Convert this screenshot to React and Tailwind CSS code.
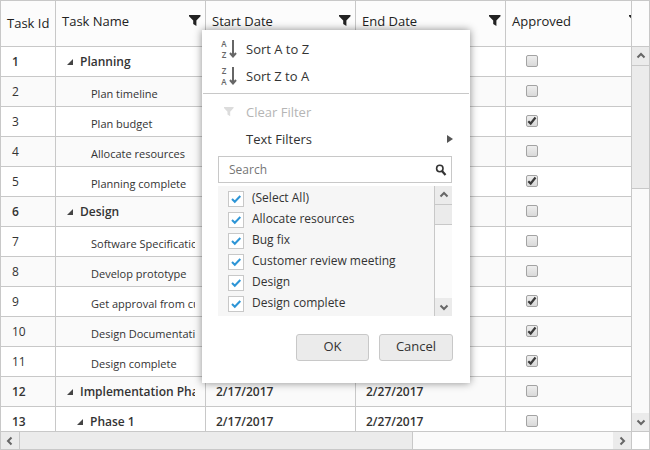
import React from "react";

const rows = [
  { id: 1, name: "Planning", level: 0, parent: true },
  { id: 2, name: "Plan timeline", level: 1 },
  { id: 3, name: "Plan budget", level: 1, approved: true },
  { id: 4, name: "Allocate resources", level: 1 },
  { id: 5, name: "Planning complete", level: 1, approved: true },
  { id: 6, name: "Design", level: 0, parent: true },
  { id: 7, name: "Software Specification", level: 1 },
  { id: 8, name: "Develop prototype", level: 1 },
  { id: 9, name: "Get approval from customer", level: 1, approved: true },
  { id: 10, name: "Design Documentation", level: 1, approved: true },
  { id: 11, name: "Design complete", level: 1, approved: true },
  { id: 12, name: "Implementation Phase", level: 0, parent: true, start: "2/17/2017", end: "2/27/2017" },
  { id: 13, name: "Phase 1", level: 1, parent: true, start: "2/17/2017", end: "2/27/2017" },
];

const filterValues = [
  "(Select All)",
  "Allocate resources",
  "Bug fix",
  "Customer review meeting",
  "Design",
  "Design complete",
];

function Funnel({ className }) {
  return (
    <svg viewBox="0 0 12 12" className={className} fill="currentColor" aria-hidden="true">
      <path d="M0 0h11.5v1.2L7.4 5.6V11L4.2 9V5.6L0 1.2z" />
    </svg>
  );
}

function Chevron({ direction }) {
  const paths = {
    up: "M1.5 6.5 5 3l3.5 3.5",
    down: "M1.5 3.5 5 7l3.5-3.5",
    left: "M6.5 1.5 3 5l3.5 3.5",
    right: "M3.5 1.5 7 5 3.5 8.5",
  };
  return (
    <svg viewBox="0 0 10 10" className="size-2.5" fill="none" stroke="#666" strokeWidth="2" aria-hidden="true">
      <path d={paths[direction]} />
    </svg>
  );
}

function SortIcon({ top, bottom }) {
  return (
    <span className="flex w-4 items-center gap-0.5 text-[#666]" aria-hidden="true">
      <span className="flex w-1.5 flex-col items-center text-[8px] leading-[11px] font-semibold">
        <span>{top}</span>
        <span>{bottom}</span>
      </span>
      <svg viewBox="0 0 8 18" className="h-[18px] w-2 shrink-0" fill="none" stroke="currentColor" strokeWidth="2">
        <path d="M4 0v16" />
        <path d="M1 13l3 3.5 3-3.5" />
      </svg>
    </span>
  );
}

function GridCheckbox({ checked, label }) {
  return (
    <span className="grid size-3">
      <input
        type="checkbox"
        defaultChecked={checked}
        aria-label={label}
        className="peer col-start-1 row-start-1 size-3 appearance-none rounded-[2px] border border-[#a3a3a3] bg-linear-to-b from-[#eee] to-[#d9d9d9]"
      />
      <svg
        viewBox="0 0 12 12"
        className="pointer-events-none invisible col-start-1 row-start-1 size-3 peer-checked:visible"
        fill="none"
        stroke="#3a3a3a"
        strokeWidth="2.2"
        aria-hidden="true"
      >
        <path d="M2.3 6.2 4.7 8.5 9.5 2.5" />
      </svg>
    </span>
  );
}

function FilterOption({ label }) {
  return (
    <label className="flex h-[21px] items-center gap-2">
      <span className="grid size-4 shrink-0">
        <input
          type="checkbox"
          defaultChecked
          className="peer col-start-1 row-start-1 size-4 appearance-none border border-[#c8c8c8] bg-white"
        />
        <svg
          viewBox="0 0 16 16"
          className="pointer-events-none invisible col-start-1 row-start-1 size-4 peer-checked:visible"
          fill="none"
          stroke="#2d95d6"
          strokeWidth="2"
          aria-hidden="true"
        >
          <path d="M4 8l2.8 2.8L12.3 5" />
        </svg>
      </span>
      <span className="pb-0.5 text-xs whitespace-nowrap">{label}</span>
    </label>
  );
}

function Columns() {
  return (
    <colgroup>
      <col className="w-[55px]" />
      <col className="w-[150px]" />
      <col className="w-[150px]" />
      <col className="w-[150px]" />
      <col className="w-[140px]" />
    </colgroup>
  );
}

function HeaderCell({ title }) {
  return (
    <th scope="col" className="border-r border-[#c8c8c8] p-0 align-top font-normal">
      <div className="flex items-center justify-between pt-[10px] pr-[4px] pl-1.5">
        <span className="leading-5">{title}</span>
        <button type="button" aria-label={"Filter " + title}>
          <Funnel className="size-3 text-[#222]" />
        </button>
      </div>
    </th>
  );
}

function Row({ row, striped }) {
  return (
    <tr
      className={
        "h-[30px] " + (striped ? "bg-[#fafafa] " : "bg-white ") + (row.parent ? "font-semibold" : "")
      }
    >
      <td className="border-r border-b border-[#c8c8c8] p-0 pl-[11px]">{row.id}</td>
      <td className="border-r border-b border-[#c8c8c8] p-0 pr-[10px]">
        <div
          className={
            "flex items-center overflow-hidden whitespace-nowrap " +
            (row.level ? "pl-5 " : "pl-2.5 ") +
            (row.parent ? "" : "pt-1 text-[11px]")
          }
        >
          {row.parent && (
            <button type="button" aria-label={"Collapse " + row.name} className="mr-1.5 w-2 shrink-0">
              <svg viewBox="0 0 8 8" className="size-2" fill="#444" aria-hidden="true">
                <path d="M7 1v6H1z" />
              </svg>
            </button>
          )}
          <span className={row.parent ? "" : "pl-[15px]"}>{row.name}</span>
        </div>
      </td>
      <td className="border-r border-b border-[#c8c8c8] p-0 pl-2.5">{row.start}</td>
      <td className="border-r border-b border-[#c8c8c8] p-0 pl-2.5">{row.end}</td>
      <td className="border-r border-b border-[#c8c8c8] p-0 pb-0.5 pl-5">
        <GridCheckbox checked={row.approved} label={"Approved: " + row.name} />
      </td>
    </tr>
  );
}

function FilterMenu() {
  return (
    <div
      role="dialog"
      aria-label="Column filter"
      className="absolute top-[29px] left-[201px] w-[268px] bg-white pt-[5px] pb-[22px] text-[13px] leading-[18px] shadow-[0_0_8px_rgba(0,0,0,0.45)]"
    >
      <div className="mx-px border-b border-[#c8c8c8] pb-1">
        <button type="button" className="flex h-[27px] w-full items-center gap-[9px] pl-[18px]">
          <SortIcon top="A" bottom="Z" />
          <span>Sort A to Z</span>
        </button>
        <button type="button" className="flex h-[27px] w-full items-center gap-[9px] pl-[18px]">
          <SortIcon top="Z" bottom="A" />
          <span>Sort Z to A</span>
        </button>
      </div>
      <div className="mx-px pt-1">
        <button type="button" disabled className="flex h-[27px] w-full items-center gap-[9px] pl-[18px] text-[#b5b5b5]">
          <span className="flex w-4 justify-center">
            <Funnel className="size-2.5 text-[#dcdcdc]" />
          </span>
          <span>Clear Filter</span>
        </button>
        <button type="button" className="flex h-[27px] w-full items-center justify-between pr-4 pl-[43px]">
          <span>Text Filters</span>
          <svg viewBox="0 0 6 8" className="h-2 w-1.5" fill="#555" aria-hidden="true">
            <path d="M0 0l6 4-6 4z" />
          </svg>
        </button>
      </div>

      <div className="mt-1 mr-[18px] ml-4">
        <div className="flex h-[27px] items-center border border-[#c8c8c8] pr-1 pl-2.5">
          <input
            type="text"
            placeholder="Search"
            aria-label="Search"
            className="min-w-0 flex-1 text-xs outline-none placeholder:text-[#767676]"
          />
          <svg viewBox="0 0 12 12" className="size-3 shrink-0" fill="none" stroke="#333" aria-hidden="true">
            <circle cx="4.8" cy="4.5" r="3.2" strokeWidth="1.6" />
            <path d="M7 7l3.5 4" strokeWidth="2.2" />
          </svg>
        </div>

        <div className="mt-[3px] flex h-[130px] bg-[#f6f6f6]">
          <div className="min-w-0 flex-1 overflow-hidden pt-0.5 pl-2.5">
            {filterValues.map((value) => (
              <FilterOption key={value} label={value} />
            ))}
          </div>
          <div className="flex w-[18px] flex-col border-l border-[#c8c8c8] bg-[#fafafa]">
            <button type="button" aria-label="Scroll up" className="grid h-[18px] place-items-center bg-[#ebebeb]">
              <Chevron direction="up" />
            </button>
            <div className="h-[21px] border-y border-[#c8c8c8] bg-[#ebebeb]" />
            <div className="flex-1" />
            <button type="button" aria-label="Scroll down" className="grid h-[18px] place-items-center bg-[#ebebeb]">
              <Chevron direction="down" />
            </button>
          </div>
        </div>
      </div>

      <div className="mt-[18px] flex justify-end gap-2.5 pr-[17px]">
        <button type="button" className="h-[27px] w-[73px] rounded-[3px] border border-[#c8c8c8] bg-[#ebebeb] pb-1">
          OK
        </button>
        <button type="button" className="h-[27px] w-[74px] rounded-[3px] border border-[#c8c8c8] bg-[#ebebeb] pb-1">
          Cancel
        </button>
      </div>
    </div>
  );
}

export default function App() {
  return (
    <div className="relative flex h-screen w-full flex-col overflow-hidden border border-[#c8c8c8] bg-white font-['Open_Sans','Noto_Sans',sans-serif] text-xs text-[#333]">
      <div className="flex h-[46px] shrink-0 border-b border-[#c8c8c8] bg-[#fcfcfc]">
        <div className="min-w-0 flex-1 overflow-hidden">
          <table className="h-[45px] w-[645px] table-fixed border-separate border-spacing-0 text-left text-[13px] text-[#222]">
            <Columns />
            <thead>
              <tr>
                <th scope="col" className="border-r border-[#c8c8c8] p-0 pl-1.5 font-normal whitespace-nowrap">
                  Task Id
                </th>
                <HeaderCell title="Task Name" />
                <HeaderCell title="Start Date" />
                <HeaderCell title="End Date" />
                <HeaderCell title="Approved" />
              </tr>
            </thead>
          </table>
        </div>
        <div className="w-[18px] border-l border-[#c8c8c8]" />
      </div>

      <div className="flex min-h-0 flex-1">
        <div className="min-w-0 flex-1 overflow-hidden">
          <table className="w-[645px] table-fixed border-separate border-spacing-0 leading-4">
            <Columns />
            <tbody>
              {rows.map((row, index) => (
                <Row key={row.id} row={row} striped={index % 2 === 1} />
              ))}
            </tbody>
          </table>
        </div>
        <div className="flex w-[18px] flex-col border-l border-[#c8c8c8] bg-[#fafafa]">
          <button type="button" aria-label="Scroll up" className="grid h-[18px] place-items-center bg-[#ebebeb]">
            <Chevron direction="up" />
          </button>
          <div className="h-[124px] border-y border-[#c8c8c8] bg-[#ebebeb]" />
          <div className="flex-1" />
          <button type="button" aria-label="Scroll down" className="grid h-[18px] place-items-center bg-[#ebebeb]">
            <Chevron direction="down" />
          </button>
        </div>
      </div>

      <div className="flex h-[18px] shrink-0 border-t border-[#c8c8c8]">
        <div className="flex min-w-0 flex-1 border-r border-[#c8c8c8] bg-[#fafafa]">
          <button type="button" aria-label="Scroll left" className="grid w-[18px] place-items-center bg-[#ebebeb]">
            <Chevron direction="left" />
          </button>
          <div className="w-5/8 border-x border-[#c8c8c8] bg-[#ebebeb]" />
          <div className="flex-1" />
          <button type="button" aria-label="Scroll right" className="grid w-[18px] place-items-center bg-[#ebebeb]">
            <Chevron direction="right" />
          </button>
        </div>
        <div className="w-[17px]" />
      </div>

      <FilterMenu />
    </div>
  );
}
